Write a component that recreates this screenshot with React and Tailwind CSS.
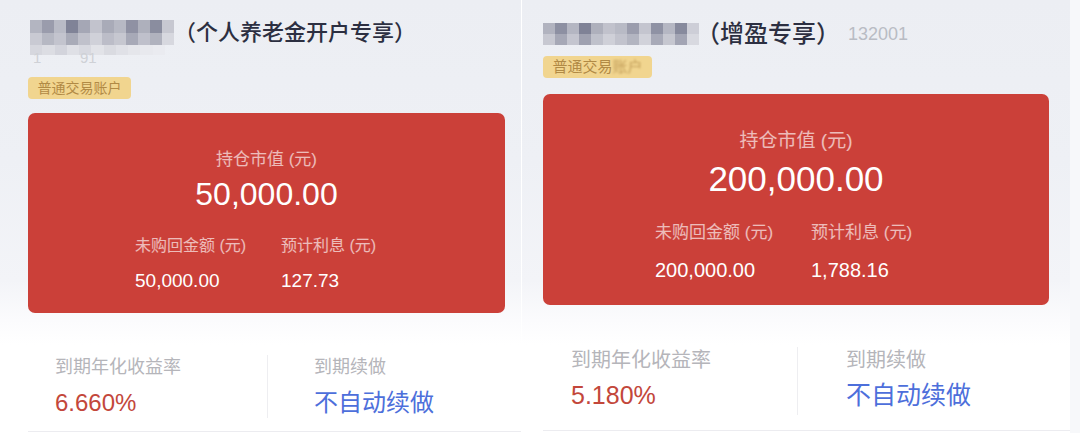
import React from "react";

const FONT = { fontFamily: "'Liberation Sans','Noto Sans CJK SC',sans-serif" };

function Pixels({ rows, cellClass, colsClass }) {
  return (
    <div className={`grid ${colsClass}`}>
      {rows.flat().map((c, i) => (
        <div key={i} className={`${cellClass} ${c}`} />
      ))}
    </div>
  );
}

const leftBlurTop = [
  ["bg-[#b3b5c1]", "bg-[#9a9cac]", "bg-[#b9bbc6]", "bg-[#808397]", "bg-[#a5a7b5]", "bg-[#c2c3cd]", "bg-[#a9abb8]", "bg-[#b7b9c4]", "bg-[#8f91a3]", "bg-[#aeb0bc]", "bg-[#8a8d9f]", "bg-[#c7c8d1]"],
  ["bg-[#c9cad3]", "bg-[#b6b8c3]", "bg-[#c3c4ce]", "bg-[#a9abb8]", "bg-[#c0c1cb]", "bg-[#d0d1d9]", "bg-[#bcbdc8]", "bg-[#c6c7d0]", "bg-[#a7a9b7]", "bg-[#bfc0cb]", "bg-[#b0b2be]", "bg-[#d7d8df]"],
];
const leftBlurLow = [
  ["bg-[#d6d7de]", "bg-[#dcdde3]", "bg-[#d3d4dc]", "bg-[#dfe0e6]", "bg-[#d8d9e0]", "bg-[#e2e3e8]", "bg-[#dadbe1]", "bg-[#e0e1e7]", "bg-[#e5e6eb]", "bg-[#e8e9ee]", "bg-[#eaebf0]"],
];
const rightBlurTop = [
  ["bg-[#b1b3bf]", "bg-[#8d90a2]", "bg-[#b4b6c2]", "bg-[#7f8296]", "bg-[#aeb0bc]", "bg-[#c1c2cc]", "bg-[#b8bac5]", "bg-[#9b9dad]", "bg-[#c4c5cf]", "bg-[#8f92a4]", "bg-[#b5b7c3]", "bg-[#878a9d]", "bg-[#cdced7]"],
  ["bg-[#c7c8d1]", "bg-[#a6a8b6]", "bg-[#c4c5cf]", "bg-[#9fa1b0]", "bg-[#bfc1cb]", "bg-[#cfd0d8]", "bg-[#c2c3cd]", "bg-[#b3b5c1]", "bg-[#d1d2da]", "bg-[#a8aab8]", "bg-[#c6c7d0]", "bg-[#a3a5b4]", "bg-[#d8d9e0]"],
];

function RedCard({ s }) {
  return (
    <div className={`flex flex-col items-center rounded-[7px] bg-[#cb4039] ${s.card}`}>
      <div className={`text-white/65 ${s.t1}`}>持仓市值 (元)</div>
      <div className={`text-white ${s.big}`}>{s.total}</div>
      <div className={`flex self-stretch ${s.rowPl} ${s.rowMt}`}>
        <div className={`flex flex-col ${s.colW}`}>
          <div className={`text-white/65 ${s.lab}`}>未购回金额 (元)</div>
          <div className={`text-white ${s.val} ${s.valMt}`}>{s.unpaid}</div>
        </div>
        <div className="flex flex-col">
          <div className={`text-white/65 ${s.lab}`}>预计利息 (元)</div>
          <div className={`text-white ${s.val} ${s.valMt}`}>{s.interest}</div>
        </div>
      </div>
    </div>
  );
}

function Bottom({ s }) {
  return (
    <div className={`flex-1 ${s.bottomWrap}`}>
      <div className={`flex border-b border-[#ececf0] ${s.bottomInner}`}>
        <div className={`flex flex-col ${s.bcol1}`}>
          <div className={`text-[#b5b5ba] ${s.blab}`}>到期年化收益率</div>
          <div className={`text-[#c3473b] ${s.bval} ${s.bvalMt}`}>{s.rate}</div>
        </div>
        <div className="w-px self-stretch bg-[#eeeef1]" />
        <div className={`flex flex-col ${s.bcol2}`}>
          <div className={`text-[#b5b5ba] ${s.blab}`}>到期续做</div>
          <div className={`text-[#4d6fdb] ${s.bval} ${s.bvalMt}`}>不自动续做</div>
        </div>
      </div>
    </div>
  );
}

const leftS = {
  card: "w-[477px] h-[200px] pt-[36px]",
  t1: "text-[17px] leading-[22px]",
  big: "text-[32px] leading-[36px] mt-[5px]",
  total: "50,000.00",
  rowPl: "pl-[107px]",
  rowMt: "mt-[23px]",
  colW: "w-[146px]",
  lab: "text-[16px] leading-[22px]",
  val: "text-[19px] leading-[24px]",
  valMt: "mt-[12px]",
  unpaid: "50,000.00",
  interest: "127.73",
  bottomWrap: "pt-[42px] pl-[28px]",
  bottomInner: "h-[77px] pb-[13px] w-[493px]",
  bcol1: "w-[239px] pl-[27px]",
  bcol2: "pl-[46px]",
  blab: "text-[18px] leading-[24px]",
  bval: "text-[24px] leading-[30px]",
  bvalMt: "mt-[9px]",
  rate: "6.660%",
};

const rightS = {
  card: "w-[506px] h-[211px] pt-[35px]",
  t1: "text-[19px] leading-[24px]",
  big: "text-[35px] leading-[40px] mt-[6px]",
  total: "200,000.00",
  rowPl: "pl-[112px]",
  rowMt: "mt-[23px]",
  colW: "w-[156px]",
  lab: "text-[17px] leading-[22px]",
  val: "text-[20px] leading-[24px]",
  valMt: "mt-[14px]",
  unpaid: "200,000.00",
  interest: "1,788.16",
  bottomWrap: "pt-[42px] pl-[21px]",
  bottomInner: "h-[84px] pb-[15px] w-[527px]",
  bcol1: "w-[254px] pl-[28px]",
  bcol2: "pl-[48px]",
  blab: "text-[20px] leading-[26px]",
  bval: "text-[25px] leading-[30px]",
  bvalMt: "mt-[7px]",
  rate: "5.180%",
};

const PANEL_BG =
  "bg-[linear-gradient(180deg,#eceef3_0px,#eef0f5_160px,#f3f4f8_280px,#fbfbfd_320px,#ffffff_345px)]";

export default function App() {
  return (
    <div className="flex w-[1080px] h-[433px] overflow-hidden bg-white" style={FONT}>
      {/* Left panel */}
      <div className={`flex w-[521px] flex-col ${PANEL_BG}`}>
        <div className="flex flex-col pl-[28px] pt-[20px]">
          <div className="flex items-center">
            <div className="ml-[2px] w-[144px]">
              <Pixels rows={leftBlurTop} colsClass="grid-cols-12" cellClass="h-[12.5px]" />
            </div>
            <div className="text-[22px] leading-[25px] font-medium text-[#2c2f41]">（个人养老金开户专享）</div>
          </div>
          <div className="relative ml-[2px] h-[20px] w-[135px]">
            <Pixels rows={leftBlurLow} colsClass="grid-cols-11" cellClass="h-[10px]" />
            <div className="absolute left-[3px] top-[5px] text-[15px] leading-[15px] text-[#cfd1d6]">1</div>
            <div className="absolute left-[50px] top-[5px] text-[15px] leading-[15px] text-[#cfd1d6]">91</div>
          </div>
          <div className="mt-[12px] flex h-[22px] w-[103px] items-center justify-center rounded-[4px] bg-[#f1d58f] text-[14px] text-[#b18a45]">
            普通交易账户
          </div>
          <div className="mt-[14px]">
            <RedCard s={leftS} />
          </div>
        </div>
        <Bottom s={leftS} />
      </div>

      <div className="w-px bg-white" />

      {/* Right panel */}
      <div className={`flex w-[548px] flex-col ${PANEL_BG}`}>
        <div className="flex flex-col pl-[21px] pt-[21px]">
          <div className="flex items-center">
            <div className="w-[156px]">
              <Pixels rows={rightBlurTop} colsClass="grid-cols-13" cellClass="h-[11px]" />
            </div>
            <div className="-ml-[3px] text-[24px] leading-[26px] font-medium text-[#2c2f41]">（增盈专享）</div>
            <div className="ml-[8px] text-[18px] leading-[26px] text-[#b9bcc4]">132001</div>
          </div>
          <div className="mt-[9px] flex h-[22px] w-[109px] items-center justify-center rounded-[4px] bg-[#f1d58f] text-[15px] text-[#b18a45]">
            普通交易<span className="blur-[1px] opacity-70">账户</span>
          </div>
          <div className="mt-[16px]">
            <RedCard s={rightS} />
          </div>
        </div>
        <Bottom s={rightS} />
      </div>
      <div className="w-[10px] bg-[#f7f8fa]" />
    </div>
  );
}
